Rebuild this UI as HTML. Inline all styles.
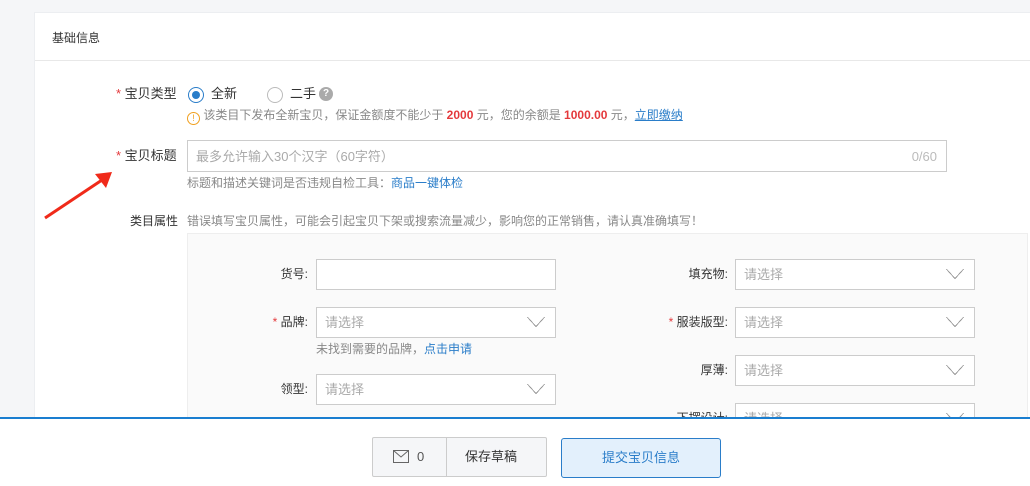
<!DOCTYPE html>
<html><head><meta charset="utf-8"><style>
*{box-sizing:border-box;margin:0;padding:0}
body{width:1030px;height:486px;overflow:hidden;background:#f5f6f8;font-family:"Liberation Sans","Noto Sans CJK SC",sans-serif;font-size:12px;color:#333;position:relative;line-height:16px}
.a{position:absolute;white-space:nowrap}
.card{position:absolute;left:34px;top:12px;width:1010px;height:420px;background:#fff;border:1px solid #eceef1}
.inp{position:absolute;border:1px solid #ccc;background:#fff;height:31px;color:#aaa;font-size:13px;padding:6px 8px;line-height:17px}
.sel::after{content:"";position:absolute;right:10px;top:9px;width:18px;height:10px;background:linear-gradient(to top right,transparent 48%,#999 49%,#999 55%,transparent 56%) left/50% 100% no-repeat,linear-gradient(to top left,transparent 48%,#999 49%,#999 55%,transparent 56%) right/50% 100% no-repeat}
.lbl{position:absolute;text-align:right;width:120px;font-size:12px;color:#333}
.red{color:#e4393c}
.blue{color:#2a7dc9}
</style></head><body>
<div class="card"></div>
<div class="a" style="left:52px;top:30px;font-size:12px;color:#333">基础信息</div>
<div class="a" style="left:35px;top:60px;width:995px;height:1px;background:#e8e8e8"></div>

<div class="a" style="left:116px;top:86px;font-size:13px"><span class="red">* </span>宝贝类型</div>
<div class="a" style="left:188px;top:87px;width:16px;height:16px;border:1px solid #2a7dc9;border-radius:50%"><div style="position:absolute;left:3px;top:3px;width:8px;height:8px;border-radius:50%;background:#2a7dc9"></div></div>
<div class="a" style="left:211px;top:86px;font-size:13px">全新</div>
<div class="a" style="left:267px;top:87px;width:16px;height:16px;border:1px solid #bbb;border-radius:50%"></div>
<div class="a" style="left:290px;top:86px;font-size:13px">二手</div>
<div class="a" style="left:319px;top:87px;width:14px;height:14px;border-radius:50%;background:#aaa;color:#fff;font-size:10px;text-align:center;line-height:14px;font-weight:bold">?</div>
<div class="a" style="left:187px;top:107px;font-size:12px;color:#888"><span style="display:inline-block;width:13px;height:13px;border:1px solid #f0a020;border-radius:50%;color:#f0a020;font-size:9px;text-align:center;line-height:11px;vertical-align:-2px">!</span> 该类目下发布全新宝贝，保证金额度不能少于 <b class="red">2000</b> 元，您的余额是 <b class="red">1000.00</b> 元，<span class="blue" style="text-decoration:underline">立即缴纳</span></div>

<div class="a" style="left:116px;top:148px;font-size:13px"><span class="red">* </span>宝贝标题</div>
<div class="inp" style="left:187px;top:140px;width:760px;height:32px;padding-top:7px">最多允许输入30个汉字（60字符）<span style="position:absolute;right:9px;top:7px;color:#bbb">0/60</span></div>
<div class="a" style="left:187px;top:175px;color:#888">标题和描述关键词是否违规自检工具：<span class="blue">商品一键体检</span></div>

<svg class="a" style="left:40px;top:165px" width="80" height="60"><line x1="5" y1="53" x2="62" y2="15" stroke="#f02a1a" stroke-width="3"/><polygon points="72,7 55,9 66,23" fill="#f02a1a"/></svg>

<div class="a" style="left:130px;top:213px;font-size:12px">类目属性</div>
<div class="a" style="left:187px;top:213px;color:#888">错误填写宝贝属性，可能会引起宝贝下架或搜索流量减少，影响您的正常销售，请认真准确填写！</div>
<div class="a" style="left:187px;top:233px;width:841px;height:190px;background:#fafafa;border:1px solid #eee"></div>

<div class="lbl" style="left:188px;top:266px">货号:</div>
<div class="inp" style="left:316px;top:259px;width:240px"></div>
<div class="lbl" style="left:608px;top:266px">填充物:</div>
<div class="inp sel" style="left:735px;top:259px;width:240px">请选择</div>

<div class="lbl" style="left:188px;top:314px"><span class="red">* </span>品牌:</div>
<div class="inp sel" style="left:316px;top:307px;width:240px">请选择</div>
<div class="lbl" style="left:608px;top:314px"><span class="red">* </span>服装版型:</div>
<div class="inp sel" style="left:735px;top:307px;width:240px">请选择</div>
<div class="a" style="left:316px;top:341px;color:#888">未找到需要的品牌，<span class="blue">点击申请</span></div>

<div class="lbl" style="left:608px;top:362px">厚薄:</div>
<div class="inp sel" style="left:735px;top:355px;width:240px">请选择</div>
<div class="lbl" style="left:188px;top:381px">领型:</div>
<div class="inp sel" style="left:316px;top:374px;width:240px">请选择</div>
<div class="lbl" style="left:608px;top:410px">下摆设计:</div>
<div class="inp sel" style="left:735px;top:403px;width:240px">请选择</div>

<div class="a" style="left:0;top:417px;width:1030px;height:69px;background:#fff;border-top:2px solid #1a7ed0"></div>
<div class="a" style="left:372px;top:437px;width:175px;height:40px;border:1px solid #ccc;background:#f5f6f8;border-radius:2px"></div>
<div class="a" style="left:446px;top:437px;width:1px;height:40px;background:#ccc"></div>
<svg class="a" style="left:393px;top:450px" width="16" height="13"><rect x="0.5" y="0.5" width="15" height="12" fill="none" stroke="#666"/><polyline points="0.5,0.5 8,7 15.5,0.5" fill="none" stroke="#666"/></svg>
<div class="a" style="left:417px;top:449px;font-size:13px;color:#555">0</div>
<div class="a" style="left:465px;top:449px;font-size:13px;color:#333">保存草稿</div>
<div class="a" style="left:561px;top:438px;width:160px;height:40px;border:1px solid #2a7dc9;background:#e3f0fc;border-radius:3px;color:#2a7dc9;font-size:13px;text-align:center;line-height:38px">提交宝贝信息</div>
</body></html>
